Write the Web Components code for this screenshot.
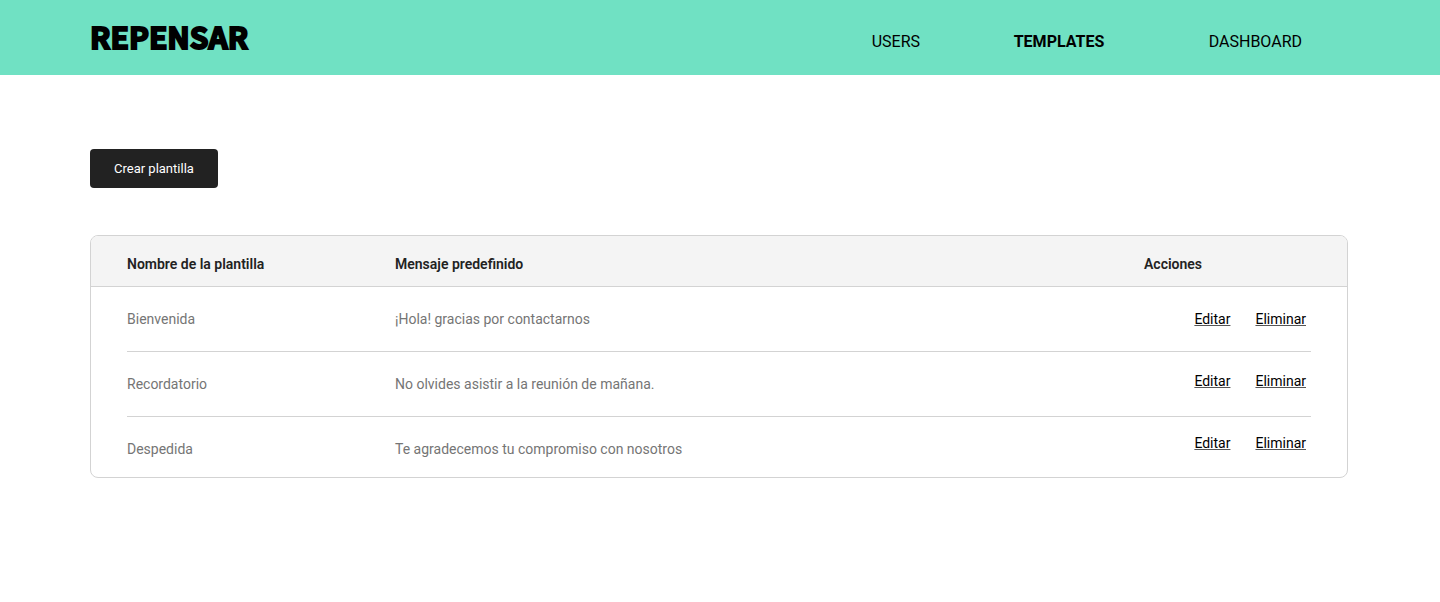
<!DOCTYPE html>
<html lang="es">
<head>
<meta charset="utf-8">
<meta name="viewport" content="width=device-width, initial-scale=1">
<title>Repensar – Templates</title>
<style>
  body { margin: 0; background: #fff; color: #000; font: 14px/20px Roboto, sans-serif; }
  main { display: flex; flex-direction: column; align-items: flex-start; gap: 47px; padding: 74px 92px 74px 90px; }
  template-table { align-self: stretch; }
</style>
</head>
<body>
<site-header>
  <nav-item href="#users">USERS</nav-item>
  <nav-item href="#templates" current>TEMPLATES</nav-item>
  <nav-item href="#dashboard">DASHBOARD</nav-item>
</site-header>
<main>
  <action-button>Crear plantilla</action-button>
  <template-table></template-table>
</main>

<script>
  class ShadowElement extends HTMLElement {
    constructor() {
      super();
      this.attachShadow({ mode: 'open' });
    }
    connectedCallback() {
      this.shadowRoot.innerHTML = this.render();
    }
  }

  customElements.define('site-header', class extends ShadowElement {
    render() {
      return `
        <style>
          :host { display: block; background: #70e1c3; }
          header { display: flex; justify-content: space-between; align-items: center; height: 75px; padding: 0 92px 0 90px; }
          .logo { padding-bottom: 3px; color: #000; text-decoration: none; font: 700 30px/40px "Noto Sans CJK SC", Roboto, sans-serif; -webkit-text-stroke: 2px #000; }
          nav { display: grid; grid-template-columns: 142px 195px auto; padding: 8px 46px 0 0; }
        </style>
        <header>
          <a class="logo" href="#">REPENSAR</a>
          <nav><slot></slot></nav>
        </header>`;
    }
  });

  customElements.define('nav-item', class extends ShadowElement {
    render() {
      return `
        <style>
          :host { display: block; font-size: 16px; line-height: 20px; }
          :host([current]) { font-weight: 700; }
          a { color: #000; text-decoration: none; }
        </style>
        <a href="${this.getAttribute('href')}"${this.hasAttribute('current') ? ' aria-current="page"' : ''}><slot></slot></a>`;
    }
  });

  customElements.define('action-button', class extends ShadowElement {
    render() {
      return `
        <style>
          :host { display: block; }
          button { display: block; height: 39px; padding: 0 24px; border: 0; border-radius: 4px; background: #222; color: #fff; font: 13px/20px Roboto, sans-serif; cursor: pointer; }
        </style>
        <button type="button"><slot></slot></button>`;
    }
  });

  customElements.define('row-actions', class extends ShadowElement {
    render() {
      return `
        <style>
          :host { display: flex; justify-content: flex-end; gap: 25px; }
          a { color: #000; text-decoration: underline #555 1px; text-underline-offset: 1px; }
        </style>
        <a href="#editar">Editar</a>
        <a href="#eliminar">Eliminar</a>`;
    }
  });

  customElements.define('template-table', class extends ShadowElement {
    get rows() {
      return [
        ['Bienvenida', '¡Hola! gracias por contactarnos'],
        ['Recordatorio', 'No olvides asistir a la reunión de mañana.'],
        ['Despedida', 'Te agradecemos tu compromiso con nosotros'],
      ];
    }
    render() {
      return `
        <style>
          :host { display: block; border: 1px solid #d3d3d3; border-radius: 8px; overflow: hidden; }
          table { width: 100%; table-layout: fixed; border-spacing: 0; text-align: left; }
          th, td { padding: 0; vertical-align: top; }
          th { padding: 18px 0 12px; background: #f4f4f4; border-bottom: 1px solid #d3d3d3; color: #222; font-weight: 600; }
          td { padding: 22px 0 23px; color: #757575; }
          th:first-child { width: 268px; }
          th:last-child { width: 203px; }
          th:first-child, td:first-child { padding-left: 36px; }
          td:last-child { padding: calc(22px - var(--row) * 3px) 41px 0 0; }
          tbody tr { background: linear-gradient(#d3d3d3, #d3d3d3) center bottom / calc(100% - 72px) 1px no-repeat; }
          tbody tr:last-child { background: none; }
          tbody tr:last-child td { padding-bottom: 18px; }
        </style>
        <table>
          <thead>
            <tr><th scope="col">Nombre de la plantilla</th><th scope="col">Mensaje predefinido</th><th scope="col">Acciones</th></tr>
          </thead>
          <tbody>
            ${this.rows.map(([name, message], i) => `<tr style="--row: ${i}"><td>${name}</td><td>${message}</td><td><row-actions></row-actions></td></tr>`).join('')}
          </tbody>
        </table>`;
    }
  });
</script>
</body>
</html>
